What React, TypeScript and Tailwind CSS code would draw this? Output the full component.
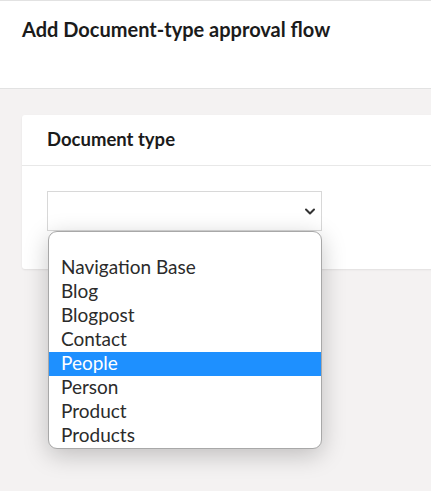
import React from 'react';

const options = ['', 'Navigation Base', 'Blog', 'Blogpost', 'Contact', 'People', 'Person', 'Product', 'Products'];

const App = () => {
    const selected = 'People';

    return (
        <div className="w-[431px] h-[491px] overflow-hidden bg-[#f4f2f2] font-['Lato','Noto_Sans',sans-serif] text-[#1b1b1b]">
            {/* ページヘッダー */}
            <div className="h-[89px] bg-white border-t border-b border-[#e2e2e2] pl-[22px] pt-[14px]">
                <h1 className="text-[20px] font-bold leading-7">Add Document-type approval flow</h1>
            </div>

            <div className="pl-[22px] pt-[26px]">
                <div className="w-[480px] bg-white rounded-[3px] shadow-[0_1px_2px_rgba(0,0,0,0.08)]">
                    <div className="h-[51px] flex items-center pl-[25px] border-b border-[#e8e8e8]">
                        <h2 className="text-[18.5px] font-bold">Document type</h2>
                    </div>
                    <div className="pl-[25px] pt-[25px] pb-[38px]">
                        <div className="relative w-[275px]">
                            <div className="h-[40px] border border-[#d8d8d8] bg-white flex items-center justify-end pr-[4px]">
                                <svg width="14" height="14" viewBox="0 0 14 14" fill="none">
                                    <path d="M3 5.5 L7 9.5 L11 5.5" stroke="#333" strokeWidth="2" strokeLinecap="round" strokeLinejoin="round" />
                                </svg>
                            </div>
                            {/* 開いたドロップダウン */}
                            <ul className="absolute left-[1px] top-[40px] w-[274px] bg-white border border-[#a8a8a8] rounded-[9px] overflow-hidden shadow-[0_6px_24px_rgba(0,0,0,0.22)] z-10">
                                {options.map((o, i) => (
                                    <li
                                        key={i}
                                        className={
                                            o === selected
                                                ? 'h-[24px] leading-[21px] pl-[12px] text-[19px] bg-[#1e90ff] text-white'
                                                : 'h-[24px] leading-[21px] pl-[12px] text-[19px] text-[#2b2b2b]'
                                        }
                                    >
                                        {o}
                                    </li>
                                ))}
                            </ul>
                        </div>
                    </div>
                </div>
            </div>
        </div>
    );
};

export default App;
